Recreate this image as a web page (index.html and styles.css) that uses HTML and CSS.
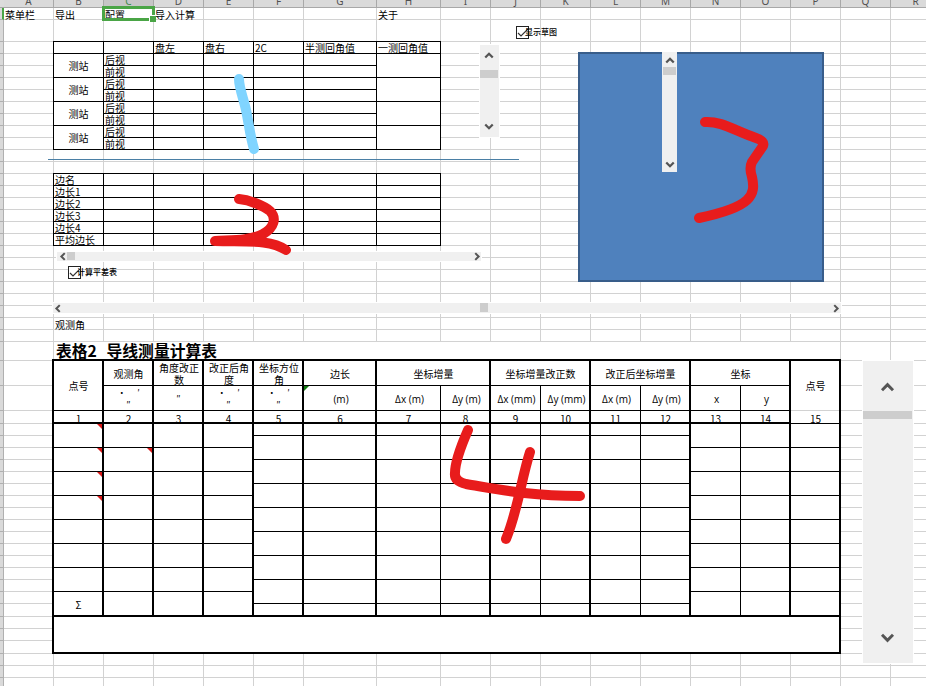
FILE: index.html
```html
<!DOCTYPE html>
<html lang="zh-CN">
<head>
<meta charset="utf-8">
<title>导线测量计算表</title>
<link rel="stylesheet" href="styles.css">
</head>
<body>
<main class="sheet" id="sheet">
  <div class="line-shape"></div>
  <div class="sketch-shape"></div>

  <div class="scroll scroll-angle"><svg class="arrow" viewBox="0 0 8 6"><path d="M1 5L4 2L7 5"/></svg><i class="thumb"></i><svg class="arrow end" viewBox="0 0 8 6"><path d="M1 1L4 4L7 1"/></svg></div>
  <div class="scroll scroll-sketch"><svg class="arrow" viewBox="0 0 8 6"><path d="M1 5L4 2L7 5"/></svg><i class="thumb"></i><svg class="arrow end" viewBox="0 0 8 6"><path d="M1 1L4 4L7 1"/></svg></div>
  <div class="scroll scroll-main"><svg class="arrow" viewBox="0 0 8 6"><path d="M1 5L4 2L7 5"/></svg><i class="thumb"></i><svg class="arrow end" viewBox="0 0 8 6"><path d="M1 1L4 4L7 1"/></svg></div>
  <div class="scroll horizontal scroll-side"><svg class="arrow" viewBox="0 0 6 8"><path d="M5 1L2 4L5 7"/></svg><i class="thumb"></i><svg class="arrow end" viewBox="0 0 6 8"><path d="M1 1L4 4L1 7"/></svg></div>
  <div class="scroll horizontal scroll-wide"><svg class="arrow" viewBox="0 0 6 8"><path d="M5 1L2 4L5 7"/></svg><i class="thumb"></i><svg class="arrow end" viewBox="0 0 6 8"><path d="M1 1L4 4L1 7"/></svg></div>

  <div class="check check-sketch"><svg viewBox="0 0 11 11"><path d="M1 6L4 9L11 2"/></svg><span>显示草图</span></div>
  <div class="check check-calc"><svg viewBox="0 0 11 11"><path d="M1 6L4 9L11 2"/></svg><span>计算平差表</span></div>

  <div class="selection"></div>
  <svg class="ink" viewBox="0 0 926 686">
    <path class="blue" d="M239 79C239 88 244 100 246 110C249 124 250 136 254 149"/>
    <path d="M239 199C250 200 264 206 270 211C277 218 274 228 263 234C249 241 232 240 215 241C245 242 270 239 286 250"/>
    <path d="M705 122C722 121 735 131 756 138Q765 141 763 146L752 162Q749 168 752 177C756 195 752 207 699 218"/>
    <path d="M468 430C461 446 455 461 455 473Q454 481 466 484C502 490 530 496 580 496"/>
    <path d="M530 452C521 480 518 510 506 539"/>
  </svg>
</main>
<script src="sheet.js"></script>
</body>
</html>
```
FILE: sheet.js
```js
const sheet = document.getElementById('sheet');
const letters = 'ABCDEFGHIJKLMNOPQR';
const LAST_ROW = 53;
const fragment = document.createDocumentFragment();

// Places a box on the grid; ranges look like "B3" or "B3:D5".
function put(range, cls, text) {
  const [a, b = a] = range.split(':');
  const col = ref => letters.indexOf(ref[0]) + 2;
  const row = ref => Number(ref.slice(1)) + 1;
  const el = document.createElement('div');
  el.className = cls;
  el.style.gridArea = `${row(a)} / ${col(a)} / ${row(b) + 1} / ${col(b) + 1}`;
  if (text) {
    const span = document.createElement('span');
    span.textContent = text;
    el.append(span);
  }
  fragment.append(el);
  return el;
}

put('A0', 'corner').style.gridArea = '1 / 1';
for (const c of letters) put(c + '0', c === 'C' ? 'col-head active' : 'col-head', c);
for (let r = 1; r <= LAST_ROW; r++) {
  put('A' + r, r === 1 ? 'row-head active' : 'row-head').style.gridArea = `${r + 1} / 1`;
  for (const c of letters) put(c + r, 'cell');
}

// Menu row
put('A1', 'text', '菜单栏');
put('B1', 'text', '导出');
put('C1', 'text', '配置');
put('D1', 'text', '导入计算');
put('H1', 'text', '关于');
put('B26', 'text roomy', '观测角');

// Angle observation table
['', '', '盘左', '盘右', '2C', '半测回角值', '一测回角值']
  .forEach((t, i) => put('BCDEFGH'[i] + 3, 'box', t));
for (let r = 4; r < 12; r += 2) {
  put(`B${r}:B${r + 1}`, 'box center', '测站');
  put('C' + r, 'box', '后视');
  put('C' + (r + 1), 'box', '前视');
  for (const c of 'DEFG') {
    put(c + r, 'box');
    put(c + (r + 1), 'box');
  }
  put(`H${r}:H${r + 1}`, 'box');
}

// Side length table
['边名', '边长1', '边长2', '边长3', '边长4', '平均边长'].forEach((t, i) => {
  put('B' + (14 + i), 'box', t);
  for (const c of 'CDEFGH') put(c + (14 + i), 'box');
});

// Traverse calculation table
put('B28:P28', 'title', '表格2 导线测量计算表');
put('B29:B30', 'box center', '点号');
put('P29:P30', 'box center no-bottom', '点号');
put('C29', 'box center', '观测角');
put('D29', 'box center wrap', '角度改正数');
put('E29', 'box center wrap', '改正后角度');
put('F29', 'box center wrap', '坐标方位角');
put('G29', 'box center', '边长');
put('H29:I29', 'box center', '坐标增量');
put('J29:K29', 'box center', '坐标增量改正数');
put('L29:M29', 'box center', '改正后坐标增量');
put('N29:O29', 'box center', '坐标');
for (const c of 'CEF') put(c + 30, 'box center dms', '•\u2003 ′\n″');
put('D30', 'box center dms', '″');
['(m)', 'Δx (m)', 'Δy (m)', 'Δx (mm)', 'Δy (mm)', 'Δx (m)', 'Δy (m)', 'x', 'y']
  .forEach((t, i) => put('GHIJKLMNO'[i] + 30, 'box center unit', t));
[...'BCDEFGHIJKLMNOP'].forEach((c, i) => put(c + 31, c === 'P' ? 'box center num soft-top' : 'box center num', String(i + 1)));

for (const c of 'BCDENOP') {
  for (let r = 32; r < 48; r += 2) put(`${c}${r}:${c}${r + 1}`, 'box center', c === 'B' && r === 46 ? 'Σ' : '');
}
for (const c of 'FGHIJKLM') {
  put(c + 32, 'box');
  for (let r = 33; r < 46; r += 2) put(`${c}${r}:${c}${r + 1}`, 'box');
  put(c + 47, 'box');
}
put('B48:P50', 'box');

// Heavy rules
['B29:P47', 'B48:P50', 'B29:O31', 'B29:B47', 'C29:C47', 'D29:D47', 'E29:E47', 'F29:F47', 'G29:G47', 'H29:I47', 'J29:K47', 'L29:M47', 'N29:O47']
  .forEach(range => put(range, 'heavy'));

// Comment and error markers
['B32', 'B34', 'B36', 'B38', 'C34'].forEach(ref => put(ref, 'marker'));
put('G30', 'marker error');

sheet.prepend(fragment);
```
FILE: styles.css
```css
* { box-sizing: border-box; }
body { margin: 0; overflow: hidden; background: #fff; }

.sheet {
  position: relative;
  width: 926px;
  height: 686px;
  overflow: hidden;
  display: grid;
  grid-template-columns: 4px repeat(6, 50px) 73px 64px repeat(10, 50px);
  grid-template-rows: 8px 12px 22px repeat(25, 12px) 19px 25px 25px 13px repeat(15, 12px) 13px 12px 12px 13px repeat(3, 12px);
  font: 10px/12px "Noto Sans CJK SC", sans-serif;
  color: #000;
}

.cell { border: solid #d2d2d2; border-width: 0 1px 1px 0; }
.corner { background: #dcdcdc; border-bottom: 1px solid #a8a8a8; }
.col-head {
  display: flex;
  justify-content: center;
  align-items: flex-end;
  overflow: hidden;
  background: #dadada;
  border: solid #a8a8a8;
  border-width: 0 1px 1px 0;
  font: 10px/12px "Noto Sans", sans-serif;
  color: #505050;
}
.col-head.active { background: #c6c6c6; color: #3c8c4c; }
.row-head { background: #dadada; border: solid #b0b0b0; border-width: 0 1px 1px 0; }
.row-head.active { border-right: 2px solid #4aa546; }

.text, .box { display: flex; align-items: center; white-space: nowrap; min-width: 0; min-height: 0; }
.text { padding: 1px 0 0 1px; z-index: 1; }
.box {
  margin: -1px 0 0 -1px;
  padding: 1px 0 0 1px;
  border: 1px solid #000;
  background: #fff;
  overflow: hidden;
}
.box.center { justify-content: center; padding: 1px 0 0; text-align: center; }
.box.wrap { white-space: normal; padding: 2px 3px 0 4px; }
.box.unit { font: 10px/12px "Open Sans", sans-serif; padding: 1px 0 0 2px; }
.box.num { padding-top: 4px; }
.box.dms { white-space: pre; font-size: 9px; padding-top: 2px; }
.box.no-bottom { border-bottom-color: #d2d2d2; }
.box.soft-top { border-top-color: #d2d2d2; }
.title {
  display: flex;
  align-items: center;
  background: #fff;
  border-right: 1px solid #d2d2d2;
  padding: 0 0 1px 2px;
  font-size: 15.8px;
  line-height: 18px;
  font-weight: 700;
  word-spacing: 6px;
}
.heavy { margin: -2px 0 0 -2px; border: 2px solid #000; }

.marker {
  justify-self: end;
  align-self: start;
  width: 5px;
  height: 5px;
  margin-right: 2px;
  background: #d81818;
  clip-path: polygon(0 0, 100% 0, 100% 100%);
}
.marker.error { justify-self: start; background: #107c10; clip-path: polygon(0 0, 100% 0, 0 100%); }

/* Objects floating over the cells */
.line-shape { position: absolute; left: 48px; top: 159px; width: 471px; height: 1px; background: #4a7fa5; }
.sketch-shape { position: absolute; left: 578px; top: 52px; width: 246px; height: 230px; background: #4f81bd; border: 2px solid #385d8a; }

.scroll {
  position: absolute;
  display: flex;
  flex-direction: column;
  align-items: center;
  background: #f0f0f0;
  box-shadow: 0 0 0 1px #fff;
}
.scroll.horizontal { flex-direction: row; }
.thumb { background: #cdcdcd; }
.arrow { width: 10px; height: 8px; flex: none; fill: none; stroke: #555; stroke-width: 1.8; }
.end { margin-top: auto; }
.horizontal .arrow { width: 7px; height: 9px; }
.horizontal .end { margin: 0 0 0 auto; }

.scroll-angle { left: 480px; top: 45px; width: 19px; height: 92px; padding: 6px 2px 6px 0; }
.scroll-angle .thumb { width: 18px; height: 8px; margin: 11px -1px 0 0; }
.scroll-sketch { left: 662px; top: 52px; width: 15px; height: 120px; padding: 4px 0 3px; box-shadow: none; }
.scroll-sketch .thumb { width: 13px; height: 8px; margin-top: 3px; }
.scroll-main { left: 863px; top: 361px; width: 50px; height: 302px; padding: 20px 1px 19px 0; }
.scroll-main .thumb { width: 49px; height: 8px; margin-top: 19px; }
.scroll-main .arrow { width: 15px; height: 11px; stroke-width: 1.6; }
.scroll-side { left: 57px; top: 252px; width: 424px; height: 9px; padding-left: 2px; }
.scroll-side .thumb { width: 8px; height: 8px; margin: 0 0 1px 1px; }
.scroll-wide { left: 53px; top: 303px; width: 788px; height: 10px; padding: 0 1px; }
.scroll-wide .thumb { width: 8px; height: 9px; margin: 0 0 1px 419px; }

.check { position: absolute; display: flex; align-items: center; font-size: 8px; line-height: 12px; font-weight: 500; white-space: nowrap; }
.check svg { width: 13px; height: 13px; background: #fff; border: 1px solid #222; fill: none; stroke: #333; stroke-width: 1.2; }
.check span { margin-left: -4px; position: relative; top: -1px; }
.check-sketch { left: 516px; top: 26px; }
.check-calc { left: 68px; top: 266px; }

.selection { position: absolute; left: 102px; top: 6px; width: 53px; height: 15px; border: 3px solid #4aa546; z-index: 2; }
.selection::after { content: ""; position: absolute; right: -4px; bottom: -4px; width: 6px; height: 6px; background: #4aa546; border: solid #fff; border-width: 1px 0 0 1px; }

.ink { position: absolute; left: 0; top: 0; width: 926px; height: 686px; fill: none; stroke: #e81c1c; stroke-width: 10; stroke-linecap: round; stroke-linejoin: round; z-index: 3; }
.ink .blue { stroke: #80d4ff; }
```
